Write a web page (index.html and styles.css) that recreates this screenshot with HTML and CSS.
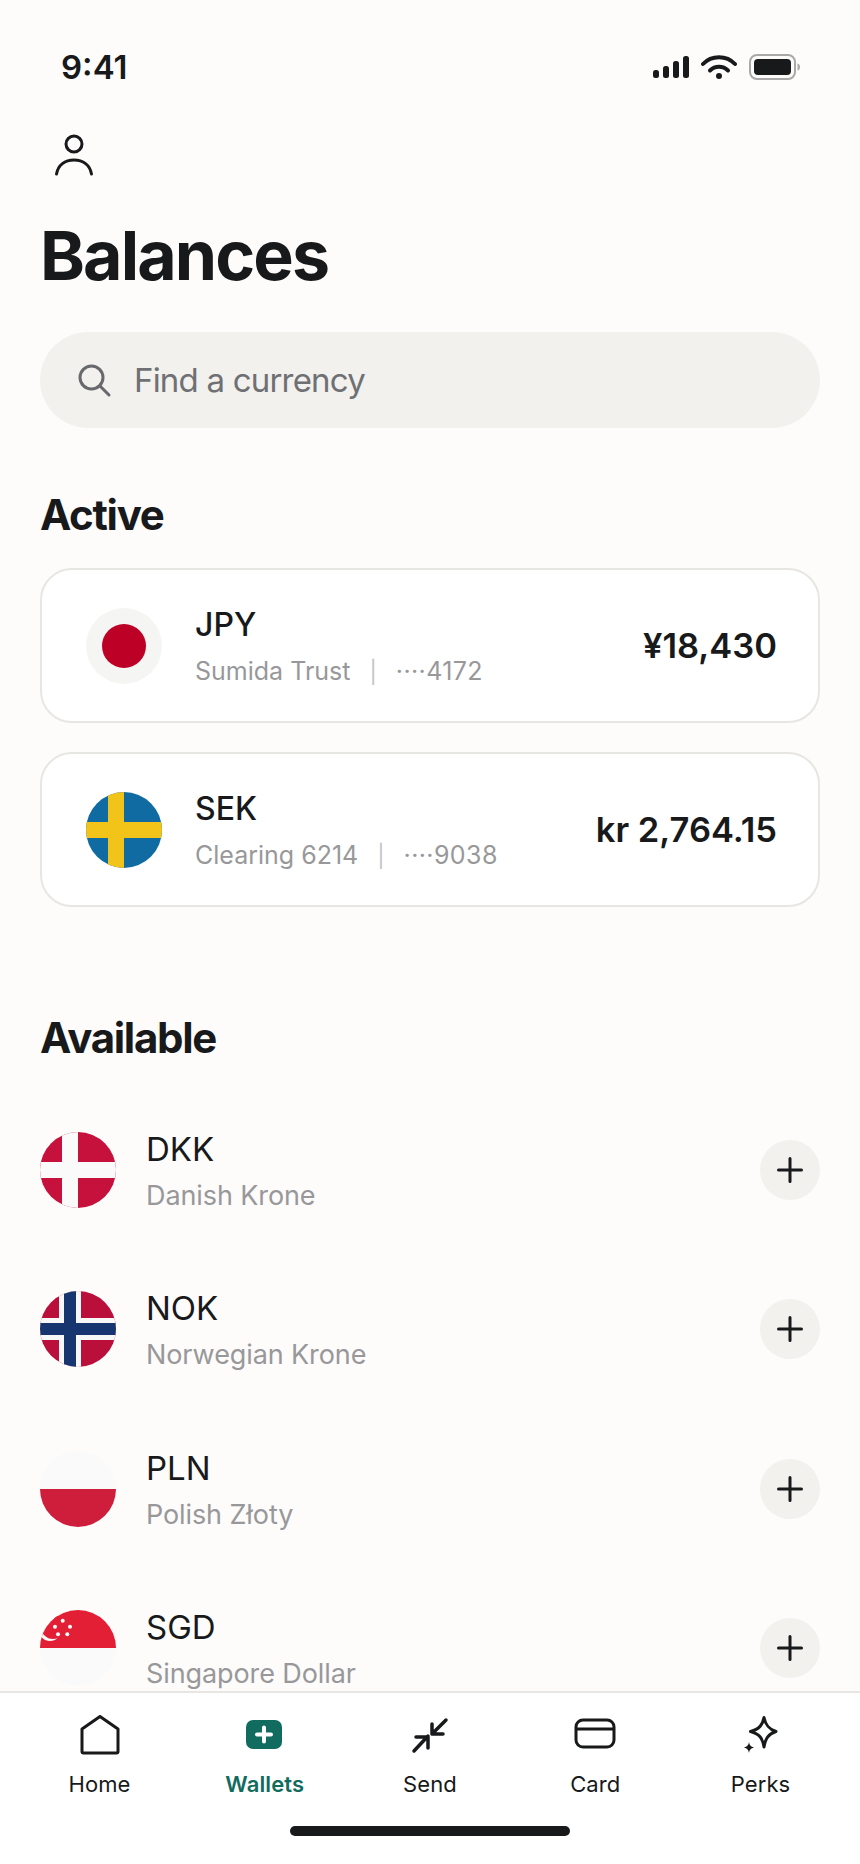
FILE: index.html
```html
<!DOCTYPE html>
<html lang="en">
  <head>
    <meta charset="UTF-8" />
    <meta name="viewport" content="width=device-width, initial-scale=1.0" />
    <title>Balances</title>
    <link rel="stylesheet" href="styles.css">
  </head>
  <body>
    <div class="phone">
      <div class="status-bar">
        <span class="time">9:41</span>
        <div class="status-icons">
          <svg width="37" height="24" viewBox="0 0 37 24">
            <rect x="1" y="15" width="6" height="8" rx="2.5" fill="#18191b" />
            <rect x="11" y="11" width="6" height="12" rx="2.5" fill="#18191b" />
            <rect x="21" y="6" width="6" height="17" rx="2.5" fill="#18191b" />
            <rect x="31" y="1" width="6" height="22" rx="2.5" fill="#18191b" />
          </svg>
          <svg width="36" height="26" viewBox="0 0 36 26" fill="none" stroke="#18191b" stroke-width="4" stroke-linecap="round">
            <path d="M2 10C10.5 1 25.5 1 34 10" />
            <path d="M9 16.5C14 11.5 22 11.5 27 16.5" />
            <circle cx="18" cy="22" r="3" fill="#18191b" stroke="none" />
          </svg>
          <svg width="52" height="28" viewBox="0 0 52 28">
            <rect x="1" y="2" width="45" height="24" rx="7" fill="none" stroke="#a9a9a9" stroke-width="2" />
            <rect x="5" y="6" width="37" height="16" rx="4" fill="#18191b" />
            <path d="M48.5 10.5C50.5 11 51 12.5 51 14C51 15.5 50.5 17 48.5 17.5Z" fill="#a9a9a9" />
          </svg>
        </div>
      </div>

      <main class="content">
        <div class="profile">
          <svg width="40" height="42" viewBox="0 0 40 42" fill="none" stroke="#18191b" stroke-width="3" stroke-linecap="round">
            <circle cx="20" cy="10" r="8" />
            <path d="M2.5 40C4 31 11 26 20 26C29 26 36 31 37.5 40" />
          </svg>
        </div>

        <h1>Balances</h1>

        <div class="search">
          <svg width="36" height="36" viewBox="0 0 36 36" fill="none" stroke="#68696c" stroke-width="3" stroke-linecap="round">
            <circle cx="15.5" cy="15.5" r="11.5" />
            <path d="M24 24L33 33" />
          </svg>
          <span>Find a currency</span>
        </div>

        <h2 class="active-title">Active</h2>

        <div class="card">
          <svg class="flag" viewBox="0 0 76 76">
            <circle cx="38" cy="38" r="38" fill="#f5f5f3" />
            <circle cx="38" cy="38" r="22" fill="#bc0026" />
          </svg>
          <div class="card-text">
            <p class="code">JPY</p>
            <p class="sub">Sumida Trust<span class="sep">|</span><span class="account">····4172</span></p>
          </div>
          <p class="amount">¥18,430</p>
        </div>

        <div class="card">
          <svg class="flag" viewBox="0 0 76 76">
            <clipPath id="clip-sek"><circle cx="38" cy="38" r="38" /></clipPath>
            <g clip-path="url(#clip-sek)">
              <rect width="76" height="76" fill="#116ba3" />
              <rect x="22" width="16" height="76" fill="#f2c318" />
              <rect y="30" width="76" height="16" fill="#f2c318" />
            </g>
          </svg>
          <div class="card-text">
            <p class="code">SEK</p>
            <p class="sub">Clearing 6214<span class="sep">|</span><span class="account">····9038</span></p>
          </div>
          <p class="amount">kr 2,764.15</p>
        </div>

        <h2 class="available-title">Available</h2>

        <div class="row">
          <svg class="flag" viewBox="0 0 76 76">
            <clipPath id="clip-dkk"><circle cx="38" cy="38" r="38" /></clipPath>
            <g clip-path="url(#clip-dkk)">
              <rect width="76" height="76" fill="#c6113c" />
              <rect x="22" width="16" height="76" fill="#fbfafa" />
              <rect y="30" width="76" height="16" fill="#fbfafa" />
            </g>
          </svg>
          <div class="row-text">
            <p class="code">DKK</p>
            <p class="sub">Danish Krone</p>
          </div>
          <div class="add">
            <svg width="26" height="26" viewBox="0 0 26 26" stroke="#18191b" stroke-width="3" stroke-linecap="round"><path d="M13 1.5V24.5M1.5 13H24.5" /></svg>
          </div>
        </div>

        <div class="row">
          <svg class="flag" viewBox="0 0 76 76">
            <clipPath id="clip-nok"><circle cx="38" cy="38" r="38" /></clipPath>
            <g clip-path="url(#clip-nok)">
              <rect width="76" height="76" fill="#ba0f3b" />
              <rect x="19" width="22" height="76" fill="#f8f8f8" />
              <rect y="27" width="76" height="22" fill="#f8f8f8" />
              <rect x="24" width="12" height="76" fill="#17366f" />
              <rect y="32" width="76" height="12" fill="#17366f" />
            </g>
          </svg>
          <div class="row-text">
            <p class="code">NOK</p>
            <p class="sub">Norwegian Krone</p>
          </div>
          <div class="add">
            <svg width="26" height="26" viewBox="0 0 26 26" stroke="#18191b" stroke-width="3" stroke-linecap="round"><path d="M13 1.5V24.5M1.5 13H24.5" /></svg>
          </div>
        </div>

        <div class="row">
          <svg class="flag" viewBox="0 0 76 76">
            <clipPath id="clip-pln"><circle cx="38" cy="38" r="38" /></clipPath>
            <g clip-path="url(#clip-pln)">
              <rect width="76" height="38" fill="#fbfafa" />
              <rect y="38" width="76" height="38" fill="#cf1d3c" />
            </g>
          </svg>
          <div class="row-text">
            <p class="code">PLN</p>
            <p class="sub">Polish Złoty</p>
          </div>
          <div class="add">
            <svg width="26" height="26" viewBox="0 0 26 26" stroke="#18191b" stroke-width="3" stroke-linecap="round"><path d="M13 1.5V24.5M1.5 13H24.5" /></svg>
          </div>
        </div>

        <div class="row">
          <svg class="flag" viewBox="0 0 76 76">
            <clipPath id="clip-sgd"><circle cx="38" cy="38" r="38" /></clipPath>
            <g clip-path="url(#clip-sgd)">
              <rect width="76" height="38" fill="#e21f35" />
              <rect y="38" width="76" height="38" fill="#fbfafa" />
              <circle cx="10" cy="20" r="11" fill="#fbfafa" />
              <circle cx="13" cy="17" r="12" fill="#e21f35" />
              <circle cx="22.7" cy="10.7" r="2" fill="#fbfafa" />
              <circle cx="15" cy="16.7" r="2" fill="#fbfafa" />
              <circle cx="30" cy="16.7" r="2" fill="#fbfafa" />
              <circle cx="18" cy="24.3" r="2" fill="#fbfafa" />
              <circle cx="27.3" cy="24.3" r="2" fill="#fbfafa" />
            </g>
          </svg>
          <div class="row-text">
            <p class="code">SGD</p>
            <p class="sub">Singapore Dollar</p>
          </div>
          <div class="add">
            <svg width="26" height="26" viewBox="0 0 26 26" stroke="#18191b" stroke-width="3" stroke-linecap="round"><path d="M13 1.5V24.5M1.5 13H24.5" /></svg>
          </div>
        </div>
      </main>

      <nav class="tabbar">
        <div class="tabs">
          <div class="tab">
            <svg width="40" height="40" viewBox="0 0 40 40" fill="none" stroke="#18191b" stroke-width="3" stroke-linejoin="round">
              <path d="M2 14L20 1.5L38 14V36.5C38 37.5 37.5 38 36.5 38H3.5C2.5 38 2 37.5 2 36.5Z" />
            </svg>
            <span>Home</span>
          </div>
          <div class="tab tab-active">
            <svg width="40" height="40" viewBox="0 0 40 40">
              <rect x="1" y="5" width="36" height="29" rx="7" fill="#116b5e" />
              <path d="M19 12.5V26.5M12 19.5H26" stroke="#fff" stroke-width="4" stroke-linecap="round" />
            </svg>
            <span>Wallets</span>
          </div>
          <div class="tab">
            <svg width="40" height="40" viewBox="0 0 40 40" fill="none" stroke="#18191b" stroke-width="3.5" stroke-linecap="round" stroke-linejoin="round">
              <path d="M4 36L18 21M6 22H18V33" />
              <path d="M36 5L22 19M22 9V19H33" />
            </svg>
            <span>Send</span>
          </div>
          <div class="tab">
            <svg width="42" height="40" viewBox="0 0 42 40" fill="none" stroke="#18191b" stroke-width="3">
              <rect x="2" y="5" width="38" height="27" rx="7" />
              <path d="M2 14H40" />
            </svg>
            <span>Card</span>
          </div>
          <div class="tab">
            <svg width="40" height="40" viewBox="0 0 40 40">
              <path d="M23 2.5C24.5 10 27.5 14 35 16.5C27.5 19 24.5 23 23 32C21.500 23 18.5 19 9.5 16.5C18.5 14 21.5 10 23 2.5Z" fill="none" stroke="#18191b" stroke-width="3" stroke-linejoin="round" />
              <path d="M8 27C8.5 30 9.5 31.5 13 32.5C9.5 33.5 8.5 35 8 38C7.5 35 6.5 33.5 3 32.5C6.5 31.5 7.5 30 8 27Z" fill="#18191b" />
            </svg>
            <span>Perks</span>
          </div>
        </div>
        <div class="home-indicator"></div>
      </nav>
    </div>
  </body>
</html>
```

FILE: styles.css
```css
* {
  margin: 0;
  box-sizing: border-box;
}
body {
  background-color: #fdfcfb;
  color: #18191b;
  font-family: Inter, "Liberation Sans", sans-serif;
}
.phone {
  position: relative;
  width: 860px;
  height: 1864px;
  overflow: hidden;
}
.status-bar {
  display: flex;
  justify-content: space-between;
  align-items: center;
  height: 134px;
  padding: 0 59px 0 61px;
}
.time {
  font-size: 33px;
  font-weight: 600;
}
.status-icons {
  display: flex;
  align-items: center;
  gap: 12px;
}
.content {
  padding: 0 40px;
}
.profile {
  height: 44px;
  padding-left: 14px;
}
h1 {
  font-size: 68px;
  font-weight: 700;
  letter-spacing: -1.9px;
  line-height: 80px;
  margin-top: 37px;
}
.search {
  display: flex;
  align-items: center;
  gap: 22px;
  height: 96px;
  margin-top: 37px;
  padding-left: 36px;
  background-color: #f2f1ee;
  border-radius: 48px;
  font-size: 33px;
  letter-spacing: -0.8px;
  color: #6f7073;
}
h2 {
  font-size: 42px;
  font-weight: 700;
  letter-spacing: -1.3px;
  line-height: 50px;
}
.active-title {
  margin-top: 62px;
  margin-bottom: 28px;
}
.available-title {
  margin-top: 106px;
  margin-bottom: 27px;
}
.card {
  display: flex;
  align-items: center;
  height: 155px;
  margin-bottom: 29px;
  padding: 0 41px 0 44px;
  background-color: #fff;
  border: 2px solid #e7e6e3;
  border-radius: 32px;
}
.flag {
  flex-shrink: 0;
  width: 76px;
  height: 76px;
}
.card-text {
  flex: 1;
  margin-left: 33px;
  padding-top: 2px;
}
.row-text {
  flex: 1;
  margin-left: 30px;
  padding-top: 2px;
}
.code {
  font-size: 32px;
  font-weight: 500;
  line-height: 40px;
}
.sub {
  margin-top: 9px;
  font-size: 25px;
  line-height: 34px;
  color: #98989a;
}
.row-text .code {
  font-weight: 400;
  font-size: 33px;
}
.row-text .sub {
  margin-top: 10px;
  font-size: 27px;
  letter-spacing: -0.1px;
}
.sep {
  margin: 0 19px;
  font-size: 22px;
  color: #c4c4c5;
}
.account {
  letter-spacing: 0.4px;
}
.amount {
  font-size: 34.5px;
  font-weight: 600;
}
.row {
  display: flex;
  align-items: center;
  height: 159.5px;
}
.add {
  display: flex;
  align-items: center;
  justify-content: center;
  width: 60px;
  height: 60px;
  border-radius: 50%;
  background-color: #f2f1ee;
}
.tabbar {
  position: absolute;
  left: 0;
  right: 0;
  bottom: 0;
  height: 173px;
  background-color: #fff;
  border-top: 2px solid #e7e6e3;
}
.tabs {
  display: flex;
  justify-content: space-between;
  padding: 0 17px;
  margin-top: 22px;
}
.tab {
  display: flex;
  flex-direction: column;
  align-items: center;
  width: 165px;
  font-size: 22px;
  font-weight: 400;
  letter-spacing: 0.1px;
}
.tab span {
  margin-top: 16px;
}
.tab-active {
  color: #116b5e;
  font-weight: 600;
}
.home-indicator {
  position: absolute;
  left: 290px;
  bottom: 28px;
  width: 280px;
  height: 10px;
  border-radius: 5px;
  background-color: #18191b;
}
```
